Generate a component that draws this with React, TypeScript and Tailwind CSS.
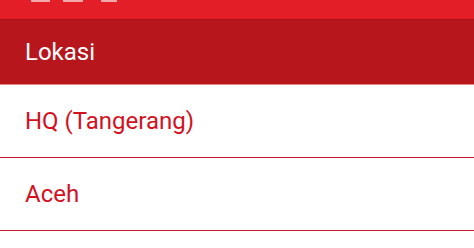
export default function App() {
  const rows = ["HQ (Tangerang)", "Aceh"];
  return (
    <div className="w-[474px] h-[248px] overflow-hidden bg-white font-['Roboto',sans-serif]">
      {/* top app bar, cut off */}
      <div className="relative h-[19px] bg-[#e41e26]">
        <div className="absolute left-[31px] top-0 h-[2px] w-[19px] bg-[#f3a9ac]" />
        <div className="absolute left-[63px] top-0 h-[2px] w-[20px] bg-[#f3a9ac]" />
        <div className="absolute left-[101px] top-0 h-[2px] w-[16px] bg-[#f3a9ac]" />
      </div>
      <div className="flex h-[66px] items-center border-t border-t-[#a71219] border-b border-b-[#e9858a] bg-[#b8161d] pl-[25px]">
        <span className="text-[24px] leading-none text-white">Lokasi</span>
      </div>
      {rows.map((r) => (
        <div
          key={r}
          className="flex h-[73px] items-center border-b border-[#c41a2a] pl-[25px]"
        >
          <span className="text-[24px] leading-none text-[#d3111f]">{r}</span>
        </div>
      ))}
    </div>
  );
}
